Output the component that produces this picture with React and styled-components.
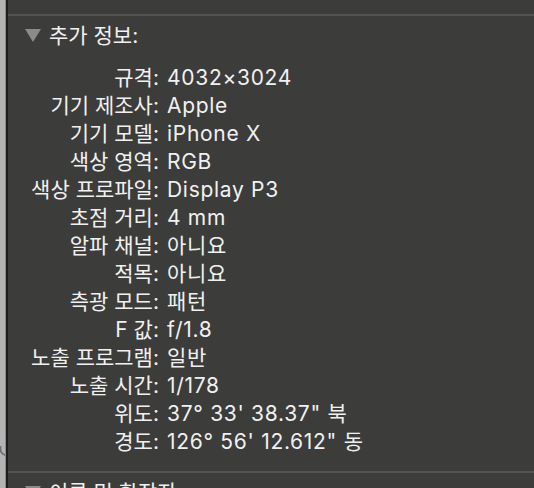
import React from "react";
import styled, { createGlobalStyle } from "styled-components";

const GlobalStyle = createGlobalStyle`
  html, body {
    margin: 0;
    padding: 0;
    background: #3c3c3b;
    overflow: hidden;
  }
  body {
    font-family: Inter, "Noto Sans CJK KR", sans-serif;
  }
`;

const rows = [
  ["규격:", "4032×3024"],
  ["기기 제조사:", "Apple"],
  ["기기 모델:", "iPhone X"],
  ["색상 영역:", "RGB"],
  ["색상 프로파일:", "Display P3"],
  ["초점 거리:", "4 mm"],
  ["알파 채널:", "아니요"],
  ["적목:", "아니요"],
  ["측광 모드:", "패턴"],
  ["F 값:", "f/1.8"],
  ["노출 프로그램:", "일반"],
  ["노출 시간:", "1/178"],
  ["위도:", "37° 33' 38.37\" 북"],
  ["경도:", "126° 56' 12.612\" 동"],
];

const App = () => {
  return (
    <>
      <GlobalStyle />
      <Window>
        <Backdrop>
          <Ghost>ㅅ</Ghost>
        </Backdrop>
        <Panel>
          <TopGap />
          <Divider />
          <SectionHeader>
            <Disclosure />
            <SectionTitle>추가 정보:</SectionTitle>
          </SectionHeader>
          <InfoGrid>
            {rows.map(([label, value]) => (
              <React.Fragment key={label}>
                <Label>{label}</Label>
                <Value>{value}</Value>
              </React.Fragment>
            ))}
          </InfoGrid>
          <Divider />
          <SectionHeader>
            <Disclosure />
            <SectionTitle>이름 및 확장자:</SectionTitle>
          </SectionHeader>
        </Panel>
      </Window>
    </>
  );
};

export default App;

const Window = styled.div`
  display: flex;
  width: 534px;
  height: 488px;
  overflow: hidden;
`;

const Backdrop = styled.div`
  position: relative;
  width: 5px;
  flex-shrink: 0;
  background: #b3b3b3;
  border-right: 1px solid #8c8c8c;
  overflow: hidden;
`;

const Ghost = styled.span`
  position: absolute;
  left: -9px;
  top: 436px;
  font-size: 20px;
  color: #6a6a6a;
`;

const Panel = styled.div`
  flex: 1;
  display: flex;
  flex-direction: column;
  background: #3c3c3b;
  border-left: 2px solid #1e1e1e;
`;

const TopGap = styled.div`
  height: 14px;
  flex-shrink: 0;
`;

const Divider = styled.div`
  height: 2px;
  flex-shrink: 0;
  background: #535352;
`;

const SectionHeader = styled.div`
  display: flex;
  align-items: center;
  gap: 8px;
  height: 38px;
  padding-left: 17px;
  flex-shrink: 0;
`;

const Disclosure = styled.span`
  width: 0;
  height: 0;
  border-left: 8px solid transparent;
  border-right: 8px solid transparent;
  border-top: 13px solid #8b8b8a;
`;

const SectionTitle = styled.span`
  font-size: 21px;
  color: #f1f1f1;
  line-height: 1;
`;

const InfoGrid = styled.div`
  display: grid;
  grid-template-columns: 151px 1fr;
  grid-auto-rows: 28px;
  column-gap: 8px;
  padding-top: 10px;
  padding-bottom: 15px;
  flex-shrink: 0;
`;

const Label = styled.span`
  text-align: right;
  font-size: 21px;
  line-height: 28px;
  color: #f1f1f1;
  white-space: nowrap;
`;

const Value = styled.span`
  font-size: 21px;
  line-height: 28px;
  letter-spacing: 0.7px;
  color: #f1f1f1;
  white-space: nowrap;
`;
